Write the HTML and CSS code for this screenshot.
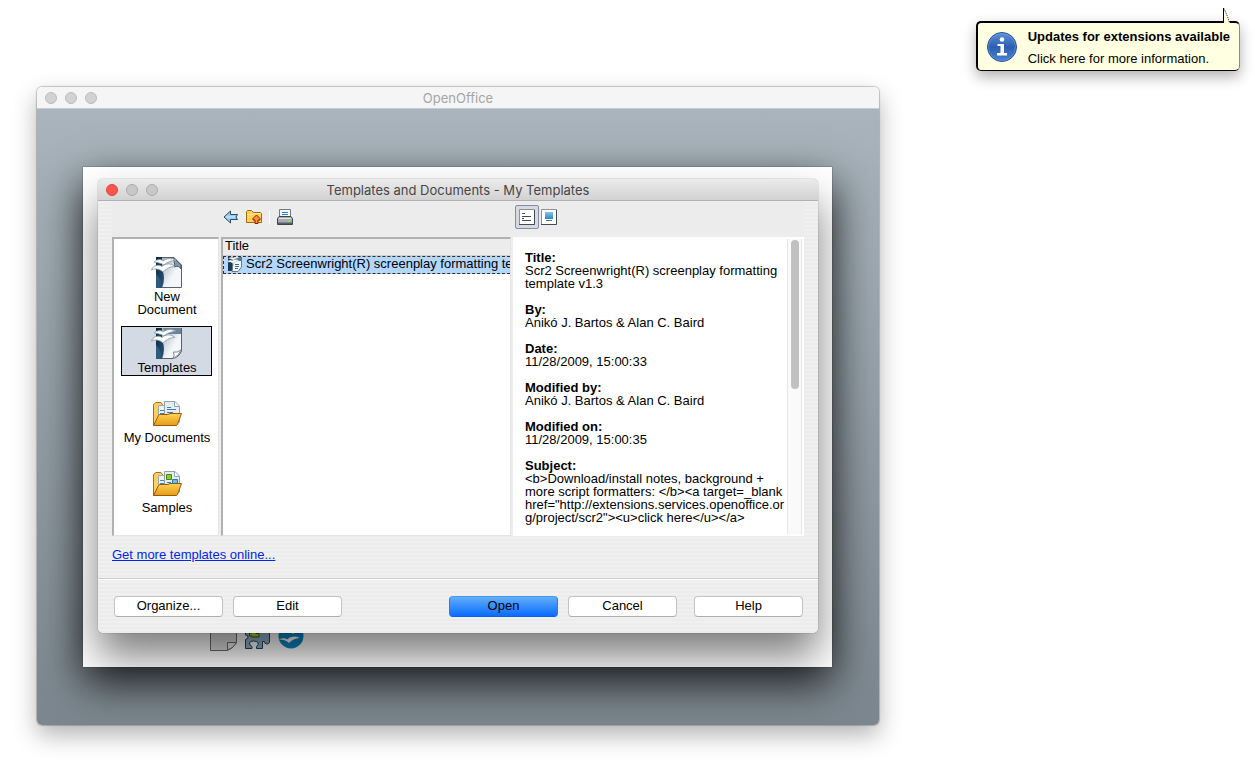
FILE: index.html
```html
<!DOCTYPE html>
<html lang="en">
<head>
    <meta charset="UTF-8">
    <meta name="viewport" content="width=device-width, initial-scale=1.0">
    <title>Templates and Documents - My Templates</title>
    <link rel="stylesheet" href="styles.css">
</head>
<body>
<svg class="defs" width="0" height="0" aria-hidden="true">
    <defs>
        <linearGradient id="spine" x1="0" y1="0" x2="1" y2="1">
            <stop offset="0" stop-color="#0c2238"/>
            <stop offset="1" stop-color="#2f5f88"/>
        </linearGradient>
        <linearGradient id="paper" x1="0" y1="0" x2="1" y2="1">
            <stop offset="0" stop-color="#9fb0bc"/>
            <stop offset="0.6" stop-color="#f4f7f9"/>
        </linearGradient>
        <linearGradient id="folder" x1="0" y1="0" x2="0" y2="1">
            <stop offset="0" stop-color="#ffd257"/>
            <stop offset="1" stop-color="#e79c12"/>
        </linearGradient>
        <linearGradient id="blue" x1="0" y1="0" x2="0" y2="1">
            <stop offset="0" stop-color="#85c4ee"/>
            <stop offset="1" stop-color="#2f83cb"/>
        </linearGradient>
        <linearGradient id="info" x1="0" y1="0" x2="0" y2="1">
            <stop offset="0" stop-color="#5e93d8"/>
            <stop offset="0.5" stop-color="#2c5fb4"/>
            <stop offset="1" stop-color="#4a82d0"/>
        </linearGradient>
    </defs>
    <!-- gulls over a page -->
    <symbol id="gulls" viewBox="0 0 28 16">
        <path d="M3 5C6 2 10 2 12 4C16 1 20 1 25 3C20 4 16 5 13 8C10 6 6 5.500 3 5Z" fill="#fff" stroke="#8195a4" stroke-width="0.8"/>
        <path d="M0.500 13C2 8 8 7 11 9.500C15 6 20 6 24 9.500C20 9.500 16 11 12 15C9 12 4 11 0.500 13Z" fill="#fff" stroke="#8195a4" stroke-width="0.8"/>
    </symbol>
    <symbol id="open-folder" viewBox="0 0 32 32">
        <path d="M2.500 27.500V6.500L5 4.500H10L11.500 6.500V10V27.500Z" fill="#ffd05c" stroke="#b0690c"/>
        <path d="M7.500 7.500H14V26H7.500Z" fill="#eaf0f4" stroke="#98a8b4"/>
        <path d="M9 12.500H14M9 15.500H14M9 18.500H14" stroke="#4388b5"/>
        <path d="M13.500 24V3.500H24L28.500 8V24Z" fill="#e4edf2" stroke="#8fa1af"/>
        <path d="M23.500 4V8.500H28" fill="#fff" stroke="#8fa1af"/>
    </symbol>
    <symbol id="folder-front" viewBox="0 0 32 32">
        <path d="M2.500 27.500L7.500 17.500Q8 16.500 9 16.500H17L19 15.500H30.500L26.500 26.500Q26 27.500 25 27.500Z" fill="url(#folder)" stroke="#9a560d"/>
    </symbol>
</svg>

<main class="desktop">
    <!-- main window -->
    <section class="window start-center">
        <header class="titlebar">
            <span class="lights"><i></i><i></i><i></i></span>
            <h1>OpenOffice</h1>
        </header>
        <div class="backdrop">
            <div class="splash">
                <svg width="27" height="32" viewBox="0 0 27 32">
                    <path d="M0.500 0.500H26.500V23Q24 29 17 31.500H0.500Z" fill="#dedede" stroke="#6c6c6c"/>
                    <path d="M17.500 31V23.500H26.500Q24 29 17.500 31Z" fill="#ededed" stroke="#6c6c6c"/>
                </svg>
                <svg width="27" height="32" viewBox="0 0 27 32">
                    <path d="M1.500 10.500H25.500V23Q25 25 23 25Q20.500 25 20.500 22.500H18.500V29.500H12.500V27.500Q15 26 14 23.500Q12.500 22 9.500 22Q6 22 5.500 24Q5.500 26.500 8 27.500V29.500H1.500V20.500Q4 20 4 18Q4 16 1.500 16Z" fill="#8fb0ca" stroke="#274158"/>
                    <path d="M8 11H12V14.500H15V18H8V17H5.500V14H8Z" fill="#a3d52d" stroke="#31570d"/>
                </svg>
                <svg width="26" height="32" viewBox="0 0 26 32">
                    <circle cx="13" cy="17" r="12.500" fill="#0d86c4"/>
                    <path d="M1 20.500Q6 18 9 20.500Q14 15.500 22 19Q15 19.500 11 24Q7 20 1 20.500Z" fill="#fff"/>
                    <path d="M8 11Q12 8 15 12Q19 8 24 11Q19 11 15 15Q12 11 8 11Z" fill="#fff"/>
                </svg>
            </div>
        </div>
    </section>

    <!-- templates dialog -->
    <section class="window dialog">
        <header class="titlebar">
            <span class="lights"><i class="close"></i><i></i><i></i></span>
            <h2>Templates and Documents - My Templates</h2>
        </header>

        <div class="toolbar">
            <div class="tools nav-tools">
                <button class="tool" aria-label="Back">
                    <svg width="16" height="16" viewBox="0 0 16 16">
                        <path d="M1 8L7.500 2V5.500H14.500L13 8L14.500 10.500H7.500V14Z" fill="#9fcbe8" stroke="#244b69"/>
                        <path d="M3 8H12" stroke="#d9eefa"/>
                    </svg>
                </button>
                <button class="tool" aria-label="Up one level">
                    <svg width="18" height="16" viewBox="0 0 18 16">
                        <path d="M1.500 13.500V2.500L2.500 1.500H6.500L8.500 3.500H15.500L16.500 4.500V13.500Z" fill="#ffd25a" stroke="#ab650c"/>
                        <path d="M2.500 5.500H8L9 4.500H15.500" fill="none" stroke="#fff0a5"/>
                        <path d="M11.500 6L15 9.500V11H13V14.500H10V11H8V9.500Z" fill="#f79336" stroke="#8e1909"/>
                    </svg>
                </button>
                <span class="divider"></span>
                <button class="tool" aria-label="Print">
                    <svg width="18" height="16" viewBox="0 0 18 16">
                        <path d="M3.500 9V0.500H14.500V9" fill="#f5fafc" stroke="#6b7d8b"/>
                        <path d="M6 3.500H12M6 5.500H12" stroke="#2a83bb"/>
                        <path d="M1.500 9.500L3 7.500H15L16.500 9.500V15.500H1.500Z" fill="#a8adb3" stroke="#3e444a"/>
                        <path d="M3 9.500H15" stroke="#e5e8ea"/>
                        <path d="M2 13.500H16V15H2Z" fill="#595f66"/>
                        <path d="M12 11H14V13H12Z" fill="#80ed28"/>
                    </svg>
                </button>
            </div>
            <div class="tools view-tools">
                <button class="tool pressed" aria-label="Document Properties">
                    <svg width="16" height="16" viewBox="0 0 16 16">
                        <path d="M0.500 0.500H15.500V15.500H0.500Z" fill="#fff" stroke="#8b9298"/>
                        <path d="M0 15.500H15.500V1" fill="none" stroke="#454b50"/>
                        <path d="M3 4.500H6M3 7.500H12M3 9.500H5M3 11.500H12" stroke="#44494e"/>
                    </svg>
                </button>
                <button class="tool" aria-label="Preview">
                    <svg width="16" height="16" viewBox="0 0 16 16">
                        <path d="M0.500 0.500H15.500V15.500H0.500Z" fill="#fff" stroke="#8b9298"/>
                        <path d="M0 15.500H15.500V1" fill="none" stroke="#454b50"/>
                        <path d="M4 3H12V10H4Z" fill="url(#blue)"/>
                        <path d="M5 11.500H11" stroke="#5d6b75"/>
                    </svg>
                </button>
            </div>
        </div>

        <div class="panes">
            <nav class="pane categories">
                <button class="category">
                    <svg width="32" height="32" viewBox="0 0 32 32">
                        <path d="M5 0H15V31H5Z" fill="url(#spine)"/>
                        <path d="M11 0.500H23L30.500 8V31H11Q15 21 11 12Z" fill="url(#paper)"/>
                        <path d="M11 0.500H23L30.500 8V30.500H11" fill="none" stroke="#56616b"/>
                        <path d="M20 1Q25 4 23 10Q28 8 30 12V8L23 1Z" fill="#8197a8" stroke="#4c5d6c"/>
                        <path d="M5 31V17Q12 23 9 31Z" fill="#2f5a7e"/>
                        <use href="#gulls" width="28" height="16"/>
                    </svg>
                    <span>New<br>Document</span>
                </button>
                <button class="category selected">
                    <svg width="32" height="32" viewBox="0 0 32 32">
                        <path d="M5 0H15V31H5Z" fill="url(#spine)"/>
                        <path d="M11 0H30V23Q28 29 22 31H11Q15 21 11 12Z" fill="url(#paper)"/>
                        <path d="M30.500 0V23Q28 29 22 30.500H11" fill="none" stroke="#56616b"/>
                        <path d="M12 0H30V6H14Z" fill="#6c8496"/>
                        <path d="M22 30.500Q24 27 22.500 24Q26 25 30 22Q28 28 22 30.500Z" fill="#fff" stroke="#7d8992"/>
                        <path d="M5 31V17Q12 23 9 31Z" fill="#2f5a7e"/>
                        <use href="#gulls" width="28" height="16"/>
                    </svg>
                    <span>Templates</span>
                </button>
                <button class="category">
                    <svg width="32" height="32" viewBox="0 0 32 32">
                        <use href="#open-folder"/>
                        <path d="M16 9.500H20M16 11.500H25M16 14.500H22" stroke="#377fac"/>
                        <use href="#folder-front"/>
                    </svg>
                    <span>My Documents</span>
                </button>
                <button class="category">
                    <svg width="32" height="32" viewBox="0 0 32 32">
                        <use href="#open-folder"/>
                        <path d="M15.500 6.500H20.500V11.500H15.500Z" fill="#91c929" stroke="#4c8613"/>
                        <path d="M21.500 11.500H26.500V18H21.500Z" fill="#6dbdf5" stroke="#207abf"/>
                        <path d="M16 14.500H20" stroke="#377fac"/>
                        <use href="#folder-front"/>
                    </svg>
                    <span>Samples</span>
                </button>
            </nav>

            <div class="pane files">
                <table>
                    <thead>
                        <tr><th>Title</th></tr>
                    </thead>
                    <tbody>
                        <tr>
                            <td>
                                <svg width="16" height="16" viewBox="0 0 16 16">
                                    <path d="M1 0H7V15H1Z" fill="#173954"/>
                                    <path d="M4.500 1H14.500V11L11 15.500H5Q7 8 4.500 1Z" fill="#f4f7f9" stroke="#667986"/>
                                    <path d="M5 0H15V5H7Z" fill="#5b778e"/>
                                    <path d="M8 8.500H12M8 10.500H12M8 12.500H11" stroke="#386b94"/>
                                    <use href="#gulls" width="14" height="8"/>
                                </svg>
                                <span>Scr2 Screenwright(R) screenplay formatting template v1.3</span>
                            </td>
                        </tr>
                    </tbody>
                </table>
            </div>

            <div class="properties">
                <dl>
                    <dt>Title:</dt>
                    <dd>Scr2 Screenwright(R) screenplay formatting<br>template v1.3</dd>
                    <dt>By:</dt>
                    <dd>Anikó J. Bartos &amp; Alan C. Baird</dd>
                    <dt>Date:</dt>
                    <dd>11/28/2009, 15:00:33</dd>
                    <dt>Modified by:</dt>
                    <dd>Anikó J. Bartos &amp; Alan C. Baird</dd>
                    <dt>Modified on:</dt>
                    <dd>11/28/2009, 15:00:35</dd>
                    <dt>Subject:</dt>
                    <dd>&lt;b&gt;Download/install notes, background +<br>more script formatters: &lt;/b&gt;&lt;a target=_blank<br>href="http://extensions.services.openoffice.or<br>g/project/scr2"&gt;&lt;u&gt;click here&lt;/u&gt;&lt;/a&gt;</dd>
                </dl>
                <div class="scrollbar"><div class="thumb"></div></div>
            </div>
        </div>

        <p class="more"><a href="#">Get more templates online...</a></p>

        <footer class="actions">
            <button class="btn">Organize...</button>
            <button class="btn">Edit</button>
            <button class="btn primary">Open</button>
            <button class="btn">Cancel</button>
            <button class="btn help">Help</button>
        </footer>
    </section>

    <!-- update notification -->
    <a class="bubble" href="#">
        <svg class="tail" width="12" height="17" viewBox="0 0 12 17">
            <path d="M1.500 17V1Q5 7 8 15V17Z" fill="#ffffe1"/>
            <path d="M1.500 15V0" stroke="#000"/>
            <path d="M1.500 0Q5 6 7.500 15" fill="none" stroke="#000" stroke-dasharray="1 1"/>
        </svg>
        <svg width="32" height="32" viewBox="0 0 32 32">
            <circle cx="16" cy="16" r="14.500" fill="url(#info)" stroke="#27509b"/>
            <circle cx="16" cy="16" r="13.500" fill="none" stroke="#7ba5de" stroke-opacity="0.5"/>
            <circle cx="16" cy="8.500" r="2.300" fill="#fff"/>
            <path d="M11.500 13H18V22H21V24.500H11V22H14.500V15H11.500Z" fill="#fff"/>
        </svg>
        <span class="message">
            <strong>Updates for extensions available</strong>
            <span>Click here for more information.</span>
        </span>
    </a>
</main>
</body>
</html>
```
FILE: styles.css
```css
* {
    box-sizing: border-box;
}

body {
    margin: 0;
    background-color: #fff;
    color: #000;
    font-family: "Liberation Sans", Helvetica, Arial, sans-serif;
    font-size: 13px;
    line-height: 13px;
}

button {
    font: inherit;
    color: inherit;
    padding: 0;
    border: none;
    background: none;
}

svg {
    display: block;
    flex: none;
}

.defs {
    position: absolute;
}

.desktop {
    position: relative;
    min-height: 100vh;
    overflow: hidden;
}

/* Windows */
.window {
    position: absolute;
    display: flex;
    flex-direction: column;
    border-radius: 5px;
}

.titlebar {
    display: grid;
    grid-template-columns: 60px 1fr 60px;
    align-items: center;
    height: 22px;
    padding: 0 8px;
    border-radius: 5px 5px 0 0;
}

.titlebar h1,
.titlebar h2 {
    margin: 0;
    font-family: Inter, "Liberation Sans", sans-serif;
    font-size: 13px;
    font-weight: normal;
    line-height: 16px;
    text-align: center;
    white-space: nowrap;
}

.lights {
    display: flex;
    gap: 8px;
}

.lights i {
    width: 12px;
    height: 12px;
    border: 1px solid #bcbcbc;
    border-radius: 50%;
    background-color: #d2d2d2;
}

.dialog .lights i {
    border-color: #acacac;
    background-color: #c8c8c8;
}

.dialog .lights .close {
    border-color: #e2463f;
    background-color: #ff544d;
}

/* Main window */
.start-center {
    top: 87px;
    right: 376px;
    bottom: 44px;
    left: 37px;
    box-shadow: 0 0 1px 1px rgba(0, 0, 0, 0.2), 0 10px 24px rgba(0, 0, 0, 0.3);
}

.start-center .titlebar {
    border-bottom: 1px solid #cbcbcb;
    background-color: #f5f5f5;
    color: #a5a5a5;
}

.backdrop {
    flex: 1;
    display: flex;
    padding: 58px 47px 58px 46px;
    border-radius: 0 0 5px 5px;
    background: linear-gradient(#a9b4bc, #7b868e);
    overflow: hidden;
}

.splash {
    flex: 1;
    display: flex;
    align-items: flex-end;
    gap: 7px;
    padding: 0 0 16px 127px;
    background-color: #fff;
    box-shadow: 0 0 1px #222, 0 16px 40px rgba(0, 0, 0, 0.75);
}

/* Dialog */
.dialog {
    top: 179px;
    right: 437px;
    left: 98px;
    background: repeating-linear-gradient(#ececec 0 2px, #f0f0f0 2px 4px);
    box-shadow: 0 0 1px rgba(0, 0, 0, 0.7), 0 24px 40px rgba(0, 0, 0, 0.5);
}

.dialog .titlebar {
    border-bottom: 1px solid #b1b1b1;
    background: linear-gradient(#ebebeb, #d2d2d2);
    color: #464646;
}

.toolbar,
.panes {
    display: grid;
    grid-template-columns: 107px minmax(0, 290fr) minmax(0, 291fr);
    gap: 2px;
    margin: 0 14px;
}

.toolbar {
    height: 36px;
    align-items: center;
    background-color: #ececec;
}

.tools {
    display: flex;
    align-items: center;
    padding-bottom: 4px;
}

.nav-tools {
    grid-column: 2;
    gap: 6px;
    padding-left: 2px;
}

.view-tools {
    grid-column: 3;
    gap: 2px;
    padding-left: 2px;
}

.divider {
    width: 1px;
    height: 14px;
    background-color: #fff;
}

.pressed {
    padding: 3px;
    border: 1px solid #858da0;
    border-radius: 2px;
    background-color: #d5d9e1;
}

.pane {
    border: 1px solid #e4e4e4;
    border-top: 2px solid #b1b1b1;
    border-left: 2px solid #b1b1b1;
    background-color: #fff;
}

/* Categories */
.categories {
    display: flex;
    flex-direction: column;
    gap: 20px;
    padding: 16px 6px 0 7px;
}

.category {
    display: flex;
    flex-direction: column;
    align-items: center;
    gap: 1px;
    padding: 1px 0 1px 1px;
    border: 1px solid transparent;
    white-space: nowrap;
}

.category.selected {
    margin-top: -12px;
    border-color: #000;
    background-color: #d4dae3;
}

/* File list */
.files {
    overflow: hidden;
}

.files table {
    width: 100%;
    table-layout: fixed;
    border-collapse: collapse;
}

.files th {
    height: 16px;
    padding: 0 2px 2px;
    background-color: #ececec;
    border-bottom: 1px solid #d0d0d0;
    font-weight: normal;
    text-align: left;
}

.files td {
    display: flex;
    align-items: center;
    gap: 3px;
    height: 18px;
    padding: 0 0 1px 3px;
    border: 1px dashed #3d2a14;
    border-right: none;
    background-color: #b3d7ff;
    white-space: nowrap;
    overflow: hidden;
}

.files td span {
    min-width: 0;
    line-height: 16px;
    overflow: hidden;
}

/* Properties */
.properties {
    display: flex;
    justify-content: space-between;
    height: 299px;
    padding: 2px 2px 2px 12px;
    background-color: #fff;
    overflow: hidden;
}

.properties dl {
    margin: 0;
    padding-top: 12px;
    white-space: nowrap;
}

.properties dt {
    font-weight: bold;
}

.properties dd {
    margin: 0 0 13px;
}

.scrollbar {
    flex: none;
    width: 15px;
    padding: 1px 3px;
    border: 1px solid #e6e6e6;
    border-width: 0 1px;
    background-color: #fafafa;
}

.thumb {
    height: 149px;
    width: 8px;
    border-radius: 4px;
    background-color: #c1c1c1;
}

.more {
    margin: 0;
    padding: 12px 14px 17px;
}

.more a {
    color: #0026ee;
}

/* Bottom buttons */
.actions {
    display: flex;
    gap: 10px;
    padding: 17px 15px 16px 16px;
    border-top: 1px solid #cacaca;
    box-shadow: inset 0 1px #fff;
}

.btn {
    flex: 0 1 109px;
    height: 21px;
    padding-bottom: 2px;
    border: 1px solid #c3c3c3;
    border-bottom-color: #acacac;
    border-radius: 4px;
    background-color: #fff;
}

.btn.primary {
    margin-left: auto;
    border-color: #4a98ee #267df2 #0a62e8;
    background: linear-gradient(#62aefb, #0a6cff);
}

.btn.help {
    margin-left: 7px;
}

/* Notification */
.bubble {
    position: absolute;
    top: 21px;
    right: 15px;
    display: flex;
    align-items: center;
    gap: 10px;
    padding: 0 9px 0 8px;
    height: 50px;
    border: 1px solid #000;
    border-top-width: 2px;
    border-left-width: 2px;
    border-right-color: #8c8c80;
    border-radius: 5px;
    background-color: #ffffe1;
    color: #000;
    text-decoration: none;
    white-space: nowrap;
    box-shadow: 0 6px 14px rgba(0, 0, 0, 0.3);
}

.message {
    display: flex;
    flex-direction: column;
    gap: 9px;
    padding-top: 2px;
}

.tail {
    position: absolute;
    top: -15px;
    right: 5px;
}
```
